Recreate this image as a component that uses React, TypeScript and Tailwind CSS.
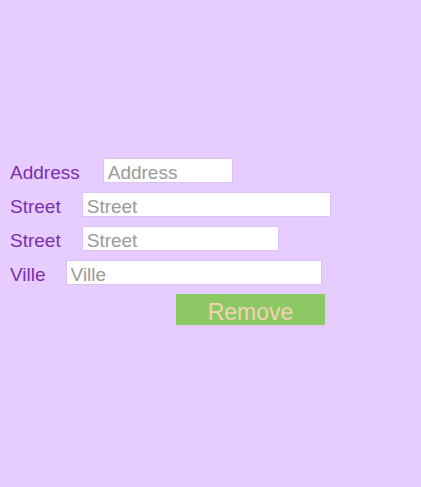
export default function App() {
  const rows = [
    { label: 'Address', width: 'w-[130px]', gap: 'ml-[23px]' },
    { label: 'Street', width: 'w-[249px]', gap: 'ml-[21px]' },
    { label: 'Street', width: 'w-[197px]', gap: 'ml-[21px]' },
    { label: 'Ville', width: 'w-[256px]', gap: 'ml-[20px]' },
  ]

  return (
    <div className="h-[487px] w-full bg-[#e6ccff] font-['Liberation_Sans',Arial,sans-serif]">
      <div className="flex flex-col gap-[9px] pt-[158px] pl-[10px]">
        {rows.map((r, i) => (
          <div key={i} className="flex h-[25px] items-start">
            <label className="text-[19px] leading-[30px] text-[#7a2fae]">{r.label}</label>
            <input
              placeholder={r.label}
              className={`${r.width} ${r.gap} h-[25px] border border-[#dcc2f2] bg-white px-[4px] pt-[5px] pb-0 text-[19px] text-[#555] placeholder:text-[#9a9a9a] outline-none`}
            />
          </div>
        ))}
      </div>
      <button className="mt-[9px] ml-[176px] h-[31px] w-[149px] bg-[#8cc864] pt-[5px] text-[23px] leading-none text-[#f3d3b4]">
        Remove
      </button>
    </div>
  )
}
